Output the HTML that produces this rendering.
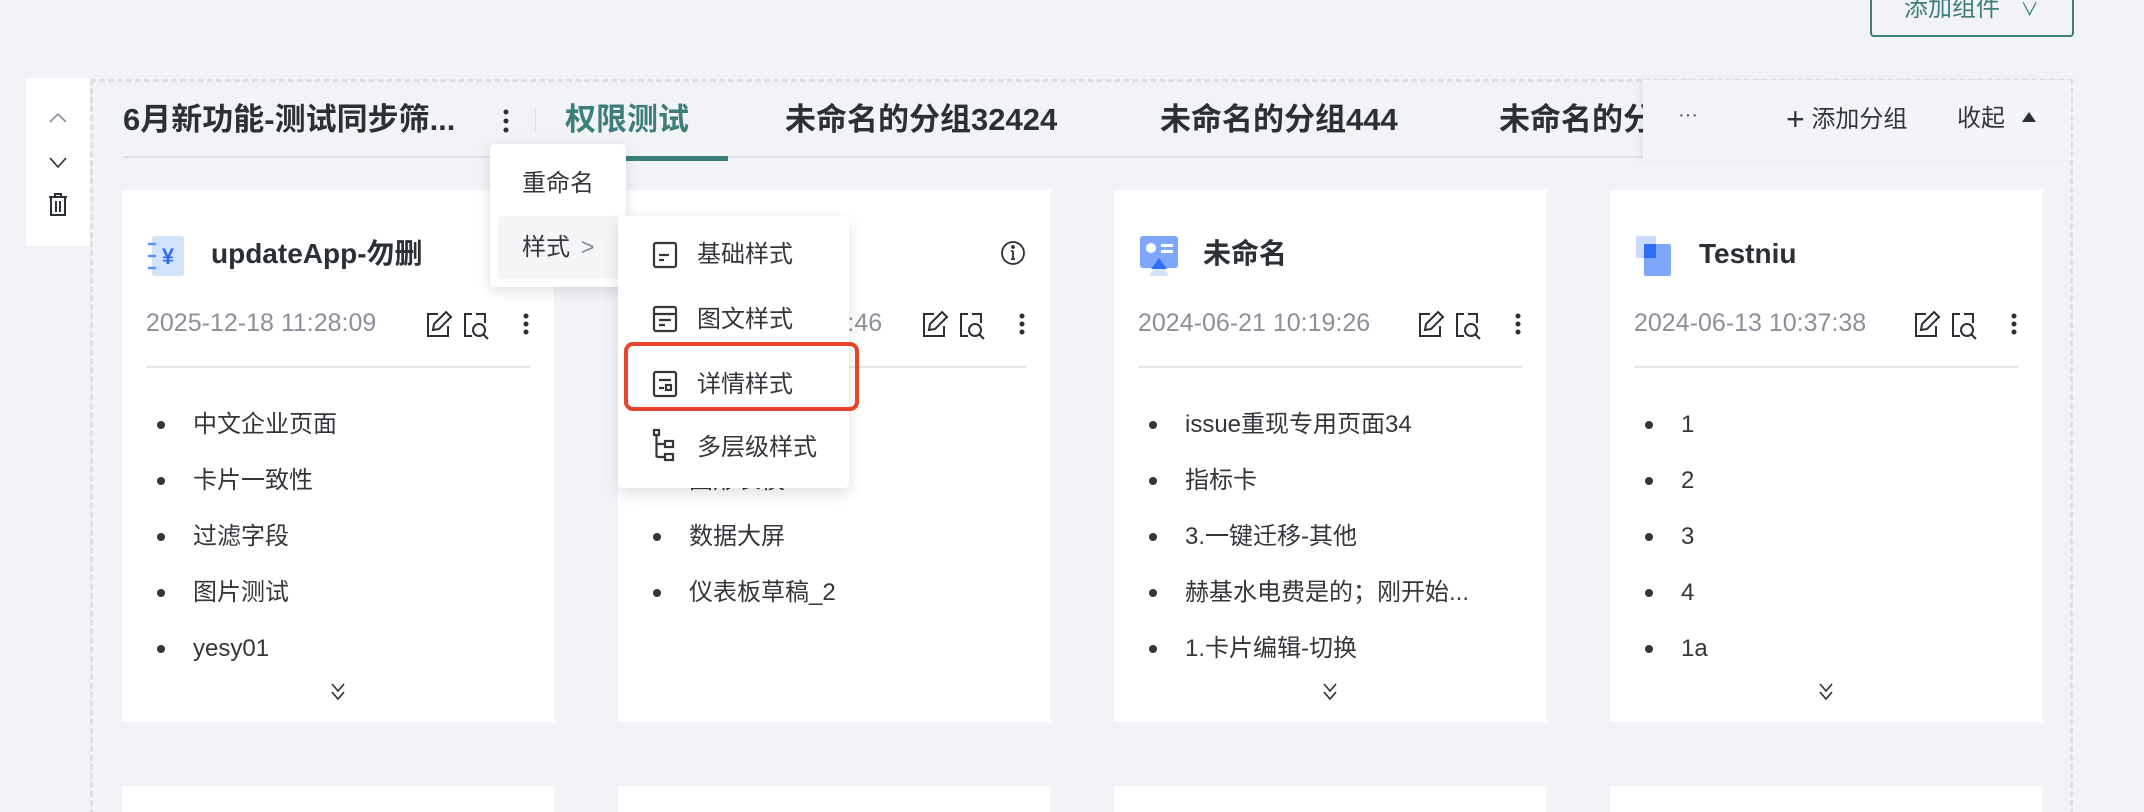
<!DOCTYPE html>
<html><head><meta charset="utf-8"><style>
*{box-sizing:border-box;margin:0;padding:0}
html,body{width:2144px;height:812px;overflow:hidden}
body{background:#f2f3f7;font-family:"Liberation Sans","Noto Sans CJK SC",sans-serif;color:#2b2f36}
#w{position:relative;width:2144px;height:812px;overflow:hidden}
.a{position:absolute}
.card{position:absolute;top:190px;width:432px;height:532px;background:#fff}
.card2{position:absolute;top:786px;width:432px;height:26px;background:#fff}
.title{position:absolute;left:89px;top:46px;font-size:28px;font-weight:bold;color:#2b2f36;line-height:36px;white-space:nowrap}
.date{position:absolute;left:24px;top:118px;font-size:25px;color:#8a8f99;line-height:30px;white-space:nowrap}
.hr{position:absolute;left:24px;right:24px;top:176px;height:2px;background:#e3e5e9}
.li{position:absolute;left:71px;font-size:24px;color:#33363b;line-height:28px;white-space:nowrap}
.li:before{content:"";position:absolute;left:-36px;top:10px;width:8px;height:8px;border-radius:50%;background:#33363b}
.tab{position:absolute;top:100px;font-size:31px;font-weight:bold;line-height:40px;color:#2b2f36;white-space:nowrap}
.mi{position:absolute;font-size:24px;color:#33363b;line-height:28px;white-space:nowrap}
.ic{position:absolute;left:302px;top:118px}
</style></head><body><div id="w">
<div class="a" style="left:1870px;top:-10px;width:204px;height:47px;border:2px solid #3d7f78;border-radius:4px;color:#3d7f78;font-size:24px;line-height:34px;padding-left:32px">添加组件 <span style="margin-left:14px;font-size:18px">∨</span></div>
<div class="a" style="left:90px;top:79px;width:1983px;height:745px;border:3px dashed #dcdfe4"></div>
<div class="a" style="left:26px;top:78px;width:64px;height:168px;background:#fff"></div>
<svg class="a" style="left:46px;top:108px" width="24" height="120" viewBox="0 0 24 120" fill="none" stroke="#8a8f99" stroke-width="1.6"><path d="M4 14l8-8 8 8"/><path d="M4 50l8 9 8-9" stroke="#2b2f36"/><g stroke="#2b2f36" stroke-width="2"><path d="M3 89h18M9 89v-3h6v3M5 89v18h14V89M10 93v11M14 93v11"/></g></svg>
<div class="tab" style="left:123px">6月新功能-测试同步筛...</div>
<svg class="a" style="left:500px;top:108px" width="12" height="26"><circle cx="6" cy="4" r="2.5" fill="#2b2f36"/><circle cx="6" cy="13" r="2.5" fill="#2b2f36"/><circle cx="6" cy="22" r="2.5" fill="#2b2f36"/></svg>
<div class="a" style="left:535px;top:107px;width:1px;height:26px;background:#dcdfe4"></div>
<div class="tab" style="left:565px;color:#3d7f78">权限测试</div>
<div class="tab" style="left:785px">未命名的分组32424</div>
<div class="tab" style="left:1160px">未命名的分组444</div>
<div class="tab" style="left:1499px;width:144px;overflow:hidden">未命名的分组</div>
<div class="a" style="left:123px;top:156px;width:1918px;height:2px;background:#dfe1e6"></div>
<div class="a" style="left:554px;top:156px;width:174px;height:5px;background:#3d7f78"></div>
<div class="a" style="left:1643px;top:80px;width:428px;height:80px;background:#f3f4f8;box-shadow:-4px 0 6px rgba(0,0,0,0.05)"></div>
<div class="a" style="left:1678px;top:104px;font-size:20px;color:#555">···</div>
<div class="a" style="left:1786px;top:104px;font-size:24px;color:#33363b;line-height:30px"><span style="font-size:32px;font-weight:200;vertical-align:-3px">+</span> 添加分组</div>
<div class="a" style="left:1957px;top:104px;font-size:24px;color:#33363b;line-height:30px">收起</div>
<div class="a" style="left:2022px;top:112px;width:0;height:0;border-left:7px solid transparent;border-right:7px solid transparent;border-bottom:10px solid #2b2f36"></div>

<div class="card" style="left:122px">
 <svg class="a" style="left:26px;top:46px" width="40" height="40"><rect x="4" width="32" height="40" rx="3" fill="#d3e1fd"/><g stroke="#5b8ff9" stroke-width="2.5" stroke-linecap="round"><path d="M1 8h6M1 20h6M1 32h6"/></g><text x="20" y="28" font-size="22" font-weight="bold" fill="#2f6ef2" text-anchor="middle" font-family="Liberation Sans">¥</text></svg>
 <div class="title">updateApp-勿删</div>
 <div class="date">2025-12-18 11:28:09</div>
 <svg class="ic" width="110" height="32" fill="none" stroke="#2b2f36" stroke-width="2"><path d="M14 6H4v22h20V18"/><path d="M22 4l5 5-12 12-6 1 1-6z"/><path d="M48 6h-7v22h7M52 6h9v9"/><circle cx="55" cy="22" r="6"/><path d="M59 26l5 5"/><circle cx="102" cy="8" r="1.5" fill="#2b2f36"/><circle cx="102" cy="16" r="1.5" fill="#2b2f36"/><circle cx="102" cy="24" r="1.5" fill="#2b2f36"/></svg>
 <div class="hr"></div>
 <div class="li" style="top:221px">中文企业页面</div>
 <div class="li" style="top:277px">卡片一致性</div>
 <div class="li" style="top:333px">过滤字段</div>
 <div class="li" style="top:389px">图片测试</div>
 <div class="li" style="top:445px">yesy01</div>
 <svg class="a" style="left:208px;top:492px" width="16" height="20" fill="none" stroke="#2b2f36" stroke-width="1.6"><path d="M2 2l6 7 6-7M2 10l6 7 6-7"/></svg>
</div>
<div class="card" style="left:618px">
 <svg class="a" style="left:382px;top:50px" width="26" height="26" fill="none" stroke="#2b2f36" stroke-width="1.8"><circle cx="13" cy="13" r="11"/><path d="M13 11v8M11 19h4M11 11h2"/><circle cx="13" cy="7" r="1" fill="#2b2f36"/></svg>
 <div class="date" style="left:32px">2024-06-22 10:29:46</div>
 <svg class="ic" width="110" height="32" fill="none" stroke="#2b2f36" stroke-width="2"><path d="M14 6H4v22h20V18"/><path d="M22 4l5 5-12 12-6 1 1-6z"/><path d="M48 6h-7v22h7M52 6h9v9"/><circle cx="55" cy="22" r="6"/><path d="M59 26l5 5"/><circle cx="102" cy="8" r="1.5" fill="#2b2f36"/><circle cx="102" cy="16" r="1.5" fill="#2b2f36"/><circle cx="102" cy="24" r="1.5" fill="#2b2f36"/></svg>
 <div class="hr"></div>
 <div class="li" style="top:277px">图形表模</div>
 <div class="li" style="top:333px">数据大屏</div>
 <div class="li" style="top:389px">仪表板草稿_2</div>
</div>
<div class="card" style="left:1114px">
 <svg class="a" style="left:26px;top:46px" width="40" height="40"><rect x="0" y="0" width="38" height="32" rx="3" fill="#7ea7fb"/><path d="M9 40l10-15 10 15z" fill="#d3e1fd"/><path d="M11 33l8-11 8 11z" fill="#2f6ef2"/><circle cx="11" cy="12" r="5" fill="#fff"/><rect x="21" y="8" width="12" height="3" fill="#fff"/><rect x="21" y="14" width="12" height="3" fill="#fff"/></svg>
 <div class="title">未命名</div>
 <div class="date">2024-06-21 10:19:26</div>
 <svg class="ic" width="110" height="32" fill="none" stroke="#2b2f36" stroke-width="2"><path d="M14 6H4v22h20V18"/><path d="M22 4l5 5-12 12-6 1 1-6z"/><path d="M48 6h-7v22h7M52 6h9v9"/><circle cx="55" cy="22" r="6"/><path d="M59 26l5 5"/><circle cx="102" cy="8" r="1.5" fill="#2b2f36"/><circle cx="102" cy="16" r="1.5" fill="#2b2f36"/><circle cx="102" cy="24" r="1.5" fill="#2b2f36"/></svg>
 <div class="hr"></div>
 <div class="li" style="top:221px">issue重现专用页面34</div>
 <div class="li" style="top:277px">指标卡</div>
 <div class="li" style="top:333px">3.一键迁移-其他</div>
 <div class="li" style="top:389px">赫基水电费是的；刚开始...</div>
 <div class="li" style="top:445px">1.卡片编辑-切换</div>
 <svg class="a" style="left:208px;top:492px" width="16" height="20" fill="none" stroke="#2b2f36" stroke-width="1.6"><path d="M2 2l6 7 6-7M2 10l6 7 6-7"/></svg>
</div>
<div class="card" style="left:1610px">
 <svg class="a" style="left:26px;top:46px" width="40" height="40"><rect x="0" y="0" width="20" height="22" rx="2" fill="#c9dafd"/><rect x="8" y="8" width="27" height="32" rx="2" fill="#7ea7fb"/><rect x="8" y="8" width="12" height="14" fill="#2f6ef2"/></svg>
 <div class="title">Testniu</div>
 <div class="date">2024-06-13 10:37:38</div>
 <svg class="ic" width="110" height="32" fill="none" stroke="#2b2f36" stroke-width="2"><path d="M14 6H4v22h20V18"/><path d="M22 4l5 5-12 12-6 1 1-6z"/><path d="M48 6h-7v22h7M52 6h9v9"/><circle cx="55" cy="22" r="6"/><path d="M59 26l5 5"/><circle cx="102" cy="8" r="1.5" fill="#2b2f36"/><circle cx="102" cy="16" r="1.5" fill="#2b2f36"/><circle cx="102" cy="24" r="1.5" fill="#2b2f36"/></svg>
 <div class="hr"></div>
 <div class="li" style="top:221px">1</div>
 <div class="li" style="top:277px">2</div>
 <div class="li" style="top:333px">3</div>
 <div class="li" style="top:389px">4</div>
 <div class="li" style="top:445px">1a</div>
 <svg class="a" style="left:208px;top:492px" width="16" height="20" fill="none" stroke="#2b2f36" stroke-width="1.6"><path d="M2 2l6 7 6-7M2 10l6 7 6-7"/></svg>
</div>
<div class="card2" style="left:122px"></div>
<div class="card2" style="left:618px"></div>
<div class="card2" style="left:1114px"></div>
<div class="card2" style="left:1610px"></div>

<div class="a" style="left:490px;top:144px;width:136px;height:143px;background:#fff;border-radius:5px;box-shadow:0 4px 14px rgba(0,0,0,0.12)"></div>
<div class="mi" style="left:522px;top:170px">重命名</div>
<div class="a" style="left:498px;top:216px;width:122px;height:63px;background:#f4f5f7;border-radius:4px"></div>
<div class="mi" style="left:522px;top:234px">样式 <span style="color:#8a8f99;margin-left:4px">&gt;</span></div>
<div class="a" style="left:618px;top:216px;width:231px;height:272px;background:#fff;border-radius:5px;box-shadow:0 6px 16px rgba(0,0,0,0.12)"></div>
<svg class="a" style="left:652px;top:240px" width="28" height="230" fill="none" stroke="#33363b" stroke-width="2.2"><rect x="2" y="3" width="22" height="24" rx="2"/><path d="M7 15h10M7 20h5"/><rect x="2" y="67" width="22" height="24" rx="2"/><path d="M2 74h22M7 80h12M7 85h6"/><rect x="2" y="132" width="22" height="24" rx="2"/><path d="M7 140h12M7 148h5"/><rect x="14" y="145" width="5" height="5"/><rect x="2" y="190" width="5" height="5"/><path d="M4.5 195v22M4.5 204h8M4.5 217h8"/><rect x="13" y="201" width="8" height="6"/><rect x="13" y="214" width="8" height="6"/></svg>
<div class="mi" style="left:697px;top:241px">基础样式</div>
<div class="mi" style="left:697px;top:306px">图文样式</div>
<div class="mi" style="left:697px;top:371px">详情样式</div>
<div class="mi" style="left:697px;top:434px">多层级样式</div>
<div class="a" style="left:624px;top:342px;width:235px;height:69px;border:4px solid #e8432d;border-radius:9px"></div>
</div></body></html>
